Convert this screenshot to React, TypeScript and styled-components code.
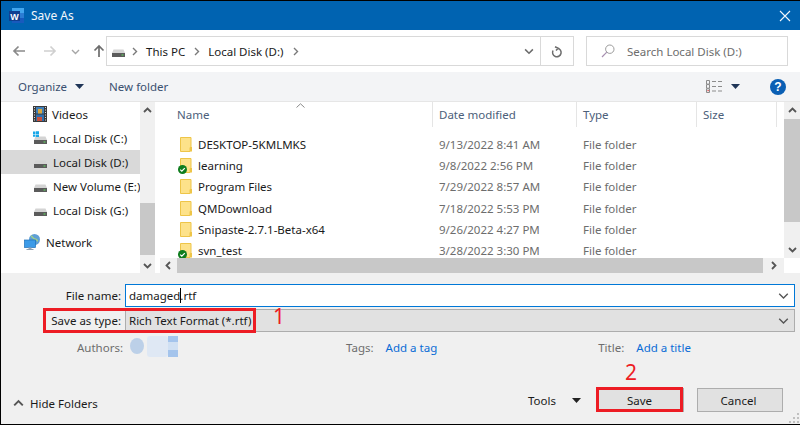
import React from "react";
import styled, { createGlobalStyle } from "styled-components";

const Global = createGlobalStyle`
  html, body { margin: 0; padding: 0; background: #fff; }
  * { box-sizing: border-box; }
  svg { flex: none; }
  #root { width: 800px; height: 425px; overflow: hidden; }
`;

const Win = styled.div`
  position: relative; width: 800px; height: 425px; display: flex; flex-direction: column;
  border-top: 1px solid #000; border-left: 1px solid #000; border-bottom: 1px solid #000;
  font-family: "Noto Sans", "Open Sans", sans-serif; font-size: 11.5px; color: #1a1a1a; overflow: hidden; background: #fff;
`;
const TitleBar = styled.div`
  height: 29px; flex: none; background: #0063b1; color: #f2f7fb; display: flex; align-items: center; padding: 0 9px 0 7px;
`;
const TitleText = styled.span` margin-left: 6px; flex: 1; font-size: 12px; `;
const AddressRow = styled.div`
  height: 42px; flex: none; background: #fff; display: flex; align-items: center; padding: 0 11px 0 11px;
`;
const NavIcons = styled.div` width: 94px; display: flex; align-items: center; flex: none; `;
const NavSlot = styled.span<{ $w: number; $j?: string }>` width: ${(p) => p.$w}px; display: flex; flex: none; justify-content: ${(p) => p.$j ?? "flex-start"}; `;
const AddressBox = styled.div`
  width: 468px; height: 30px; flex: none; border: 1px solid #d9d9d9; display: flex; align-items: center; padding-left: 4px;
`;
const Crumb = styled.span` color: #1a1a1a; margin: 0 7px; white-space: nowrap; `;
const BoxFill = styled.div` flex: 1; `;
const BoxEnd = styled.div`
  width: 33px; height: 100%; border-left: 1px solid #d9d9d9; display: flex; align-items: center; justify-content: center;
`;
const SearchBox = styled.div`
  width: 202px; height: 30px; margin-left: 12px; flex: none; border: 1px solid #d9d9d9; display: flex; align-items: center; padding-left: 14px; gap: 12px; color: #6d6d6d;
`;
const Toolbar = styled.div`
  height: 30px; flex: none; background: #f3f4f6; display: flex; align-items: center; padding: 0 14px 0 17px; color: #3a5070; border-bottom: 1px solid #e6e6e6;
`;
const ToolLabel = styled.span` white-space: nowrap; `;
const ToolSpacer = styled.div` flex: 1; `;
const Body = styled.div` height: 171px; flex: none; display: flex; background: #fff; `;
const NavPane = styled.div` width: 139px; flex: none; padding-top: 0; `;
const NavItem = styled.div<{ $sel?: boolean; $top?: number; $indent?: number }>`
  height: 24px; display: flex; align-items: center; gap: 5px; white-space: nowrap; overflow: hidden;
  padding-left: ${(p) => p.$indent ?? 32}px; margin-top: ${(p) => p.$top ?? 0}px;
  background: ${(p) => (p.$sel ? "#d9d9d9" : "transparent")}; color: #1a1a1a;
`;
const VScroll = styled.div<{ $w: number }>`
  width: ${(p) => p.$w}px; flex: none; background: #f0f0f0; display: flex; flex-direction: column; align-items: stretch;
`;
const ArrowCell = styled.div<{ $h?: number }>`
  height: ${(p) => p.$h ?? 17}px; flex: none; display: flex; align-items: center; justify-content: center;
`;
const Track = styled.div<{ $gap: number; $h: number }>`
  margin-top: ${(p) => p.$gap}px; height: ${(p) => p.$h}px; background: #c8c8c8; flex: none;
`;
const TrackFill = styled.div` flex: 1; `;
const Gutter = styled.div` width: 5px; flex: none; background: #fff; `;
const FilePane = styled.div` flex: 1; min-width: 0; display: flex; flex-direction: column; `;
const FileMain = styled.div` flex: 1; min-height: 0; display: flex; `;
const ListArea = styled.div` flex: 1; min-width: 0; overflow: hidden; position: relative; `;
const Header = styled.div`
  height: 25px; display: grid; grid-template-columns: 273px 144px 120px 80px; align-items: center; color: #4c607a;
`;
const HeadCell = styled.div<{ $pad: number; $line?: boolean }>`
  height: 25px; line-height: 26px; padding-left: ${(p) => p.$pad}px; border-right: ${(p) => (p.$line ? "1px solid #e5e5e5" : "none")};
`;
const SortCaret = styled.svg` position: absolute; left: 136px; top: 1px; `;
const Rows = styled.div` padding-top: 7px; `;
const Row = styled.div`
  height: 21.2px; display: grid; grid-template-columns: 273px 144px 120px; align-items: center; color: #6d6d6d; white-space: nowrap;
`;
const NameCell = styled.div` position: relative; display: flex; align-items: center; gap: 6px; padding-left: 20px; color: #1a1a1a; `;
const Badge = styled.svg` position: absolute; left: 18px; top: 7px; `;
const DateCell = styled.div` padding-left: 6px; `;
const TypeCell = styled.div` padding-left: 6px; `;
const HScroll = styled.div` height: 15px; flex: none; display: flex; background: #f0f0f0; `;
const HThumb = styled.div` flex: 1; background: #c8c8c8; `;
const HArrow = styled.div<{ $w: number }>` width: ${(p) => p.$w}px; flex: none; display: flex; align-items: center; justify-content: center; `;
const Corner = styled.div` width: 16px; flex: none; background: #fff; `;
const Bottom = styled.div` flex: 1; background: #f0f0f0; position: relative; padding-top: 11px; display: flex; flex-direction: column; `;
const FormRow = styled.div<{ $mt?: number }>`
  display: flex; align-items: center; height: 22px; margin-top: ${(p) => p.$mt ?? 0}px;
`;
const FormLabel = styled.div` width: 120px; text-align: right; flex: none; color: #1a1a1a; `;
const Field = styled.div<{ $active?: boolean }>`
  margin-left: 4px; width: 670px; height: 23px; display: flex; align-items: center; padding: 0 5px 0 3px;
  background: ${(p) => (p.$active ? "#fff" : "#e1e1e1")}; border: 1px solid ${(p) => (p.$active ? "#0078d7" : "#adadad")};
`;
const FieldText = styled.span` flex: 1; white-space: nowrap; `;
const Caret = styled.span`
  display: inline-block; width: 1px; height: 15px; background: #000; vertical-align: -3px; margin-right: -1px;
`;
const MetaRow = styled.div` display: flex; align-items: center; height: 20px; margin-top: 6px; color: #6d6d6d; `;
const MetaLabel = styled.span<{ $x: number }>` margin-left: ${(p) => p.$x}px; white-space: nowrap; `;
const MetaLink = styled.a` color: #0a6cd6; margin-left: 12px; white-space: nowrap; `;
const ActionRow = styled.div` display: flex; align-items: center; height: 24px; margin-top: 31px; padding-left: 12px; `;
const HideGroup = styled.div` flex: 1; display: flex; align-items: center; gap: 6px; padding-top: 6px; color: #1a1a1a; `;
const ToolsLabel = styled.span` color: #1a1a1a; `;
const ToolsCaret = styled.span` margin-left: 16px; display: flex; `;
const Button = styled.button`
  width: 86px; height: 24px; background: #e1e1e1; border: 1px solid #adadad; font: inherit; color: #1a1a1a; padding: 0 3px 0 0; flex: none;
`;
const SaveBtn = styled(Button)` margin-left: 17px; `;
const CancelBtn = styled(Button)` margin-left: 13px; margin-right: 17px; `;
const RedBox = styled.div<{ $l: number; $t: number; $w: number; $h: number }>`
  position: absolute; left: ${(p) => p.$l}px; top: ${(p) => p.$t}px; width: ${(p) => p.$w}px; height: ${(p) => p.$h}px;
  border: 3px solid #ed1c24; pointer-events: none;
`;
const RedNum = styled.span<{ $l: number; $t: number }>`
  position: absolute; left: ${(p) => p.$l}px; top: ${(p) => p.$t}px; color: #ed1c24; font-size: 21px; line-height: 24px;
`;
const Grip = styled.svg` position: absolute; right: 1px; bottom: 1px; `;
const AuthorBlur = styled.svg` margin-left: 7px; `;

const WordIcon = () => (
  <svg width="17" height="16" viewBox="0 0 17 16">
    <rect x="4" y="0" width="12" height="15" fill="#41a5ee" />
    <rect x="4" y="5" width="12" height="5" fill="#2b7cd3" />
    <rect x="4" y="10" width="12" height="5" fill="#185abd" />
    <rect x="1" y="3" width="11" height="10" fill="#103f91" />
    <text x="6.5" y="11.5" fill="#fff" fontSize="9" fontWeight="700" textAnchor="middle" fontFamily="Liberation Sans">W</text>
  </svg>
);
const Close = () => (
  <svg width="12" height="12" viewBox="0 0 12 12"><path d="M1 1l10 10M11 1L1 11" stroke="#f2f7fb" strokeWidth="1.1" fill="none" /></svg>
);
const ArrowL = ({ c }: { c: string }) => (
  <svg width="14" height="12" viewBox="0 0 14 12"><path d="M13 6H2M6.5 1.5L2 6l4.5 4.5" stroke={c} strokeWidth="1.7" fill="none" /></svg>
);
const ArrowR = ({ c }: { c: string }) => (
  <svg width="14" height="12" viewBox="0 0 14 12"><path d="M1 6h11M7.5 1.5L12 6l-4.5 4.5" stroke={c} strokeWidth="1.7" fill="none" /></svg>
);
const ArrowUp = () => (
  <svg width="12" height="14" viewBox="0 0 12 14"><path d="M6 13V2M1.5 6.5L6 2l4.5 4.5" stroke="#6d6d6d" strokeWidth="1.7" fill="none" /></svg>
);
const Chev = ({ d = "down", c = "#6d6d6d", s = 9, w = 1.4 }: { d?: "down" | "up" | "left" | "right"; c?: string; s?: number; w?: number }) => {
  const p = { down: "M1 3l3.5 3.5L8 3", up: "M1 6l3.5-3.5L8 6", left: "M6 1L2.5 4.5 6 8", right: "M3 1l3.5 3.5L3 8" }[d];
  return <svg width={s} height={s} viewBox="0 0 9 9"><path d={p} stroke={c} strokeWidth={w} fill="none" /></svg>;
};
const Tri = ({ c = "#1f3557" }: { c?: string }) => (
  <svg width="9" height="5" viewBox="0 0 9 5"><path d="M0 0h9L4.5 5z" fill={c} /></svg>
);
const Drive = () => (
  <svg width="15" height="16" viewBox="0 0 15 16">
    <path d="M2.5 6.5h10L14 10H1z" fill="#d4d4d4" />
    <rect x="1" y="10" width="13" height="4" fill="#5b5b5b" />
    <rect x="10.5" y="11.5" width="2" height="1" fill="#5ee05e" />
  </svg>
);
const DriveWin = () => (
  <svg width="15" height="16" viewBox="0 0 15 16">
    <path d="M2.5 6.5h10L14 10H1z" fill="#d4d4d4" />
    <rect x="1" y="10" width="13" height="4" fill="#5b5b5b" />
    <rect x="10.5" y="11.5" width="2" height="1" fill="#5ee05e" />
    <path d="M0 1.5h2.5v2.4H0zM3 1.3h3v2.6H3zM0 4.4h2.5v2.3H0zM3 4.4h3v2.5H3z" fill="#19a7e8" />
  </svg>
);
const Film = () => (
  <svg width="14" height="16" viewBox="0 0 14 16">
    <rect x="0" y="0" width="14" height="16" fill="#3a3a3a" />
    <path d="M1 1h1v1H1zM1 3.5h1v1H1zM1 6h1v1H1zM1 8.5h1v1H1zM1 11h1v1H1zM1 13.5h1v1H1zM12 1h1v1h-1zM12 3.5h1v1h-1zM12 6h1v1h-1zM12 8.5h1v1h-1zM12 11h1v1h-1zM12 13.5h1v1h-1z" fill="#ddd" />
    <rect x="3" y="1" width="8" height="6.5" fill="#3f7fb8" />
    <rect x="5" y="3" width="4" height="4.5" fill="#d9a63c" />
    <rect x="3" y="8.5" width="8" height="6.5" fill="#2f6fae" />
    <rect x="4" y="11" width="5" height="4" fill="#c9503a" />
  </svg>
);
const Network = () => (
  <svg width="17" height="17" viewBox="0 0 17 17">
    <circle cx="10.5" cy="5.5" r="5.5" fill="#5f9fd6" />
    <path d="M7 2c2 1 2 3 4 3s2 2 3 2" stroke="#9fd08a" strokeWidth="1.5" fill="none" />
    <rect x="0.5" y="6" width="11" height="7.5" fill="#3c9be8" stroke="#1d6fb8" strokeWidth="0.7" />
    <rect x="4.5" y="13.5" width="3" height="1.5" fill="#9ab" />
    <rect x="2.5" y="15" width="7" height="1" fill="#8fa0b0" />
  </svg>
);
const Folder = () => (
  <svg width="12" height="15" viewBox="0 0 12 15">
    <path d="M.5.5h10.5v10l-1 0v4H.5z" fill="#fde28a" stroke="#eec548" />
    <rect x="10" y="10" width="2" height="4.5" fill="#eec548" />
  </svg>
);
const Check = () => (
  <Badge width="9" height="9" viewBox="0 0 9 9">
    <circle cx="4.5" cy="4.5" r="4.5" fill="#0f7d1e" />
    <path d="M2.2 4.6l1.6 1.5 3-3" stroke="#fff" strokeWidth="1.2" fill="none" />
  </Badge>
);
const Refresh = () => (
  <svg width="12" height="13" viewBox="0 0 12 13">
    <path d="M4 1.8l3.2 1.5L5 5.6M6.5 3.2A4.3 4.3 0 1 1 2 5.5" stroke="#6d6d6d" strokeWidth="1.5" fill="none" />
  </svg>
);
const Search = () => (
  <svg width="14" height="14" viewBox="0 0 14 14">
    <circle cx="8.8" cy="5.2" r="4.2" stroke="#9a9a9a" fill="none" />
    <path d="M5.8 8.2L1 13" stroke="#a78fb0" strokeWidth="1.2" />
  </svg>
);
const ViewIcon = () => (
  <svg width="17" height="13" viewBox="0 0 17 13">
    <path d="M.5.5h3v3.6h-3zM.5 4.6h3v3.6h-3zM.5 8.8h3v3.7h-3z" fill="none" stroke="#8c8c8c" />
    <rect x="1.5" y="10" width="1.2" height="1.2" fill="#d33" />
    <path d="M6 1.5h4M12 1.5h4M6 6.5h4M12 6.5h4M6 11h4M12 11h4" stroke="#8c8c8c" />
  </svg>
);
const Help = () => (
  <svg width="16" height="16" viewBox="0 0 16 16">
    <circle cx="8" cy="8" r="8" fill="#0a5fb4" />
    <text x="8" y="12.4" fill="#fff" fontSize="12" fontWeight="700" textAnchor="middle" fontFamily="Liberation Sans">?</text>
  </svg>
);

const files = [
  ["DESKTOP-5KMLMKS", "9/13/2022 8:41 AM", false],
  ["learning", "9/8/2022 2:56 PM", true],
  ["Program Files", "7/29/2022 8:57 AM", false],
  ["QMDownload", "7/18/2022 5:53 PM", false],
  ["Snipaste-2.7.1-Beta-x64", "9/26/2022 4:27 PM", false],
  ["svn_test", "3/28/2022 3:30 PM", true],
] as const;

export default function App() {
  return (
    <Win>
      <Global />
      <TitleBar>
        <WordIcon />
        <TitleText>Save As</TitleText>
        <Close />
      </TitleBar>
      <AddressRow>
        <NavIcons>
          <NavSlot $w={31}><ArrowL c="#8a8a8a" /></NavSlot>
          <NavSlot $w={28}><ArrowR c="#d0d0d0" /></NavSlot>
          <NavSlot $w={22}><Chev c="#a6a6a6" /></NavSlot>
          <NavSlot $w={13}><ArrowUp /></NavSlot>
        </NavIcons>
        <AddressBox>
          <Drive />
          <NavSlot $w={13} $j="flex-end"><Chev d="right" c="#7a7a7a" /></NavSlot>
          <Crumb>This PC</Crumb>
          <Chev d="right" c="#7a7a7a" />
          <Crumb>Local Disk (D:)</Crumb>
          <Chev d="right" c="#7a7a7a" />
          <BoxFill />
          <Chev c="#6d6d6d" s={10} />
          <NavSlot $w={6} />
          <BoxEnd><Refresh /></BoxEnd>
        </AddressBox>
        <SearchBox>
          <Search />
          <span>Search Local Disk (D:)</span>
        </SearchBox>
      </AddressRow>
      <Toolbar>
        <ToolLabel>Organize</ToolLabel>
        <NavSlot $w={24} $j="center"><Tri /></NavSlot>
        <NavSlot $w={18} />
        <ToolLabel>New folder</ToolLabel>
        <ToolSpacer />
        <ViewIcon />
        <NavSlot $w={25} $j="center"><Tri /></NavSlot>
        <NavSlot $w={22} />
        <Help />
      </Toolbar>
      <Body>
        <NavPane>
          <NavItem><Film />Videos</NavItem>
          <NavItem><DriveWin />Local Disk (C:)</NavItem>
          <NavItem $sel><Drive />Local Disk (D:)</NavItem>
          <NavItem><Drive />New Volume (E:)</NavItem>
          <NavItem><Drive />Local Disk (G:)</NavItem>
          <NavItem $top={8} $indent={23}><Network />Network</NavItem>
        </NavPane>
        <VScroll $w={15}>
          <ArrowCell><Chev d="up" c="#555" w={1.8} /></ArrowCell>
          <Track $gap={84} $h={52} />
          <TrackFill />
          <ArrowCell $h={16}><Chev c="#555" w={1.8} /></ArrowCell>
        </VScroll>
        <Gutter />
        <FilePane>
          <FileMain>
            <ListArea>
              <SortCaret width="9" height="5" viewBox="0 0 9 5"><path d="M.5 4.5L4.5.8l4 3.7" stroke="#8a8a8a" fill="none" /></SortCaret>
              <Header>
                <HeadCell $pad={17} $line>Name</HeadCell>
                <HeadCell $pad={6} $line>Date modified</HeadCell>
                <HeadCell $pad={6} $line>Type</HeadCell>
                <HeadCell $pad={6} $line>Size</HeadCell>
              </Header>
              <Rows>
                {files.map(([n, d, ok]) => (
                  <Row key={n}>
                    <NameCell><Folder />{ok && <Check />}{n}</NameCell>
                    <DateCell>{d}</DateCell>
                    <TypeCell>File folder</TypeCell>
                  </Row>
                ))}
              </Rows>
            </ListArea>
            <VScroll $w={16}>
              <ArrowCell><Chev d="up" c="#555" w={1.8} /></ArrowCell>
              <Track $gap={0} $h={103} />
              <TrackFill />
              <ArrowCell $h={18}><Chev c="#555" w={1.8} /></ArrowCell>
            </VScroll>
          </FileMain>
          <HScroll>
            <HArrow $w={17}><Chev d="left" c="#555" w={1.8} /></HArrow>
            <HThumb />
            <HArrow $w={21}><Chev d="right" c="#555" w={1.8} /></HArrow>
            <Corner />
          </HScroll>
        </FilePane>
      </Body>
      <Bottom>
        <FormRow>
          <FormLabel>File name:</FormLabel>
          <Field $active><FieldText>damaged<Caret />.rtf</FieldText><Chev c="#555" s={11} w={1.1} /></Field>
        </FormRow>
        <FormRow $mt={3}>
          <FormLabel>Save as type:</FormLabel>
          <Field><FieldText>Rich Text Format (*.rtf)</FieldText><Chev c="#555" s={11} w={1.1} /></Field>
        </FormRow>
        <MetaRow>
          <MetaLabel $x={76}>Authors:</MetaLabel>
          <AuthorBlur width="50" height="24" viewBox="0 0 50 24">
            <ellipse cx="7" cy="11" rx="7" ry="8" fill="#bcd0e8" />
            <rect x="17" y="1" width="21" height="21" rx="3" fill="#dfe8f4" />
            <rect x="38" y="1" width="10" height="6" fill="#a4c4ec" />
            <rect x="38" y="7" width="10" height="8" fill="#d0e0f3" />
            <rect x="38" y="15" width="10" height="7" fill="#a4c4ec" />
          </AuthorBlur>
          <MetaLabel $x={166}>Tags:</MetaLabel>
          <MetaLink>Add a tag</MetaLink>
          <MetaLabel $x={161}>Title:</MetaLabel>
          <MetaLink>Add a title</MetaLink>
        </MetaRow>
        <ActionRow>
          <HideGroup><Chev d="up" c="#555" s={11} w={1.6} />Hide Folders</HideGroup>
          <ToolsLabel>Tools</ToolsLabel>
          <ToolsCaret><Tri c="#222" /></ToolsCaret>
          <SaveBtn>Save</SaveBtn>
          <CancelBtn>Cancel</CancelBtn>
        </ActionRow>
        <Grip width="10" height="10" viewBox="0 0 10 10"><path d="M8 0h2v2H8zM4 4h2v2H4zM8 4h2v2H8zM0 8h2v2H0zM4 8h2v2H4zM8 8h2v2H8z" fill="#c0c0c0" /></Grip>
      </Bottom>
      <RedBox $l={42} $t={307} $w={213} $h={25} />
      <RedNum $l={272} $t={303}>1</RedNum>
      <RedBox $l={595} $t={386} $w={87} $h={25} />
      <RedNum $l={624} $t={359}>2</RedNum>
    </Win>
  );
}
